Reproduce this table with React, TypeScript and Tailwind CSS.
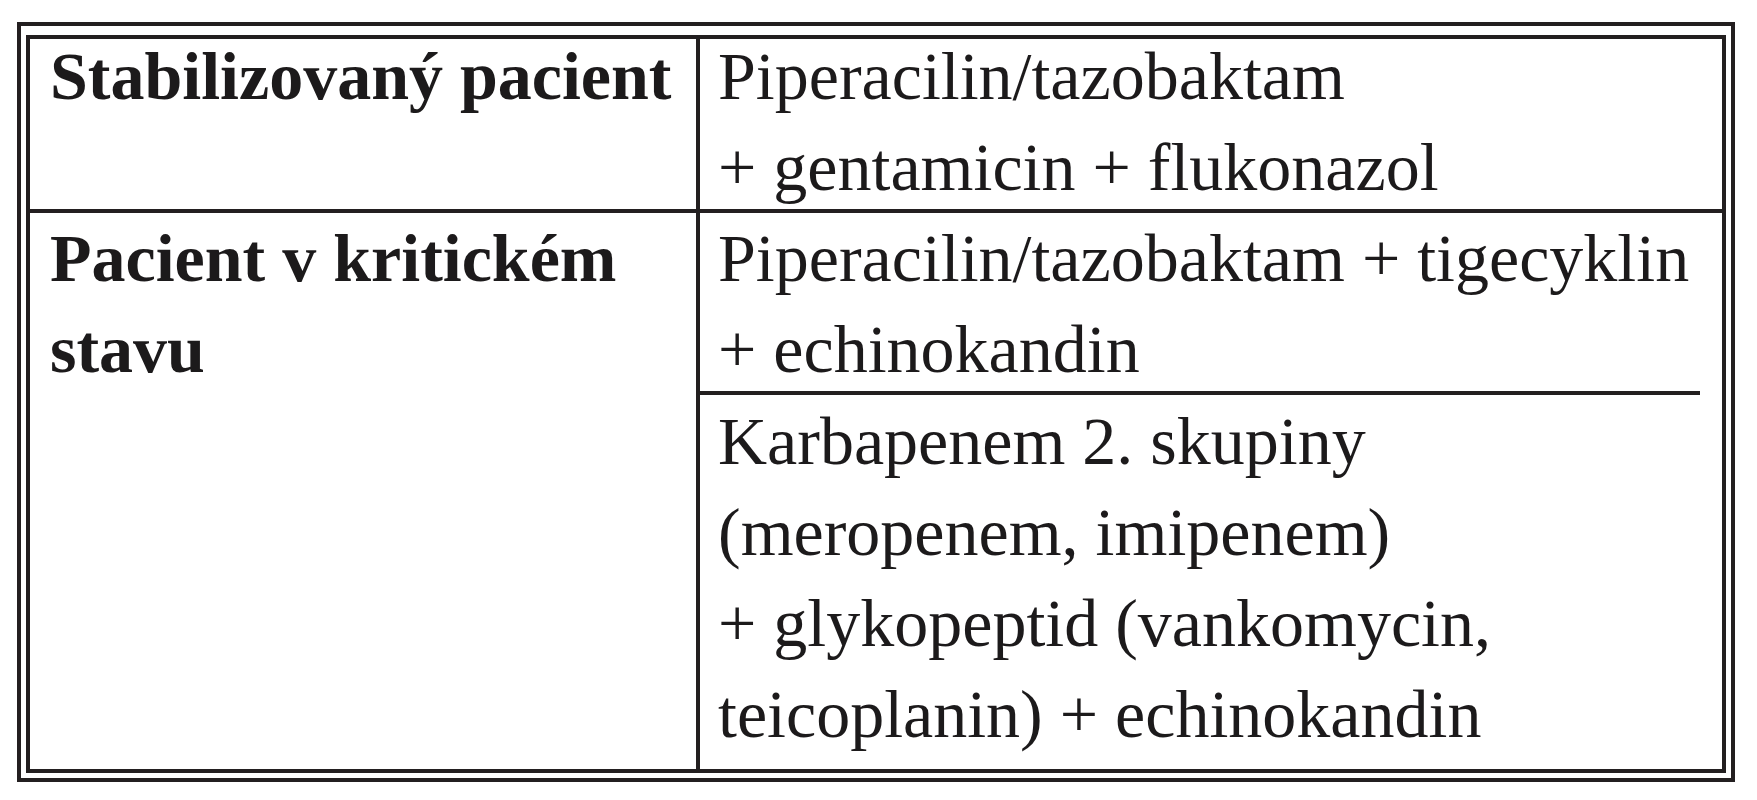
const rows = {
  stable: {
    label: ["Stabilizovaný pacient"],
    therapy: ["Piperacilin/tazobaktam", "+ gentamicin + flukonazol"],
  },
  critical: {
    label: ["Pacient v kritickém", "stavu"],
    first: ["Piperacilin/tazobaktam + tigecyklin", "+ echinokandin"],
    second: [
      "Karbapenem 2. skupiny",
      "(meropenem, imipenem)",
      "+ glykopeptid (vankomycin,",
      "teicoplanin) + echinokandin",
    ],
  },
};

function Lines({ items, bold }: { items: string[]; bold?: boolean }) {
  return (
    <>
      {items.map((line, i) => (
        <div key={i} className={`whitespace-nowrap ${bold ? "font-bold" : "font-normal"}`}>
          {line}
        </div>
      ))}
    </>
  );
}

export default function App() {
  return (
    <div
      className="min-h-screen bg-white pt-[22px] pl-[17px] text-[#1c1a1b] text-[68px] leading-[91px]"
      style={{ fontFamily: '"Liberation Serif", "Times New Roman", serif' }}
    >
      <div className="w-[1718px] h-[760px] border-4 border-[#231f20] pt-[9px] px-[5px] pb-[5px]">
        <div className="h-full border-4 border-[#231f20] grid grid-cols-[670px_1022px] grid-rows-[174px_556px]">
          {/* row 1 */}
          <div className="border-r-4 border-b-4 border-[#231f20] pl-[20px]">
            <div className="-mt-[8px]">
              <Lines items={rows.stable.label} bold />
            </div>
          </div>
          <div className="border-b-4 border-[#231f20] pl-[18px]">
            <div className="-mt-[8px]">
              <Lines items={rows.stable.therapy} />
            </div>
          </div>

          {/* row 2 */}
          <div className="border-r-4 border-[#231f20] pl-[20px]">
            <Lines items={rows.critical.label} bold />
          </div>
          <div className="flex flex-col">
            <div className="h-[182px] shrink-0 border-b-4 border-[#231f20] mr-[22px] pl-[18px]">
              <Lines items={rows.critical.first} />
            </div>
            <div className="pl-[18px] pt-[1px]">
              <Lines items={rows.critical.second} />
            </div>
          </div>
        </div>
      </div>
    </div>
  );
}
